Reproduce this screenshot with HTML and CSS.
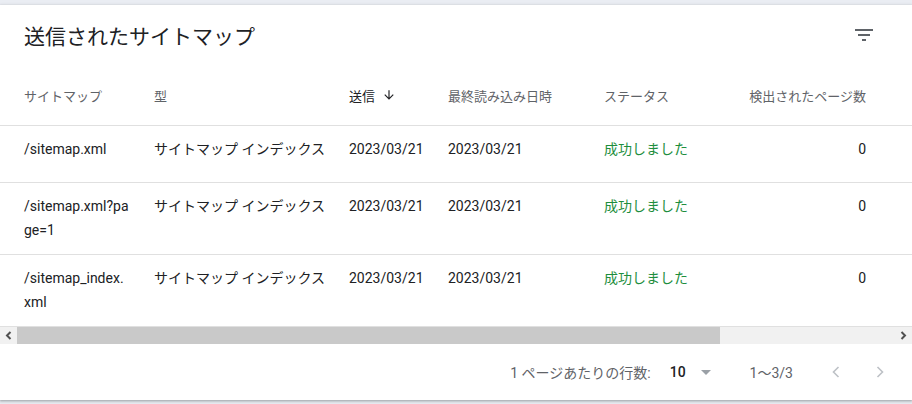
FILE: index.html
```html
<!DOCTYPE html>
<html lang="ja">
<head>
<meta charset="utf-8">
<title>送信されたサイトマップ</title>
<link rel="stylesheet" href="styles.css">
</head>
<body>
<section class="card">
  <header class="card-head">
    <h1 class="title">送信されたサイトマップ</h1>
    <button class="icon-btn" aria-label="フィルタ">
      <svg class="filter-icon" viewBox="0 0 24 24" width="24" height="24"><path d="M10 18h4v-2h-4v2zM3 6v2h18V6H3zm3 7h12v-2H6v2z"/></svg>
    </button>
  </header>
  <div class="scroller">
    <table class="grid">
      <colgroup>
        <col class="c-map"><col class="c-type"><col class="c-sent"><col class="c-read"><col class="c-status"><col class="c-pages"><col class="c-rest">
      </colgroup>
      <thead>
        <tr>
          <th>サイトマップ</th>
          <th>型</th>
          <th class="sorted">送信<svg class="sort-icon" viewBox="0 0 24 24" width="14" height="14"><path d="M20 12l-1.41-1.41L13 16.17V4h-2v12.17l-5.58-5.59L4 12l8 8 8-8z"/></svg></th>
          <th>最終読み込み日時</th>
          <th>ステータス</th>
          <th class="num">検出されたページ数</th>
          <th></th>
        </tr>
      </thead>
      <tbody>
        <tr>
          <td class="path">/sitemap.xml</td>
          <td class="type">サイトマップ インデックス</td>
          <td>2023/03/21</td>
          <td>2023/03/21</td>
          <td class="ok">成功しました</td>
          <td class="num">0</td>
          <td></td>
        </tr>
        <tr>
          <td class="path">/sitemap.xml?page=1</td>
          <td class="type">サイトマップ インデックス</td>
          <td>2023/03/21</td>
          <td>2023/03/21</td>
          <td class="ok">成功しました</td>
          <td class="num">0</td>
          <td></td>
        </tr>
        <tr>
          <td class="path">/sitemap_index.xml</td>
          <td class="type">サイトマップ インデックス</td>
          <td>2023/03/21</td>
          <td>2023/03/21</td>
          <td class="ok">成功しました</td>
          <td class="num">0</td>
          <td></td>
        </tr>
      </tbody>
    </table>
  </div>
  <div class="hscroll" aria-hidden="true">
    <span class="hs-btn"><svg viewBox="0 0 17 17" width="17" height="17"><path d="M10.5 5L7 8.5 10.5 12"/></svg></span>
    <span class="hs-thumb"></span>
    <span class="hs-track"></span>
    <span class="hs-btn"><svg viewBox="0 0 17 17" width="17" height="17"><path d="M6.5 5L10 8.5 6.5 12"/></svg></span>
  </div>
  <footer class="pager">
    <span class="pager-label">1 ページあたりの行数:</span>
    <span class="page-size">10<span class="caret"></span></span>
    <span class="range">1〜3/3</span>
    <button class="nav-btn" aria-label="前のページ"><svg viewBox="0 0 24 24" width="24" height="24"><polyline points="14.5,7 9.5,12 14.5,17"/></svg></button>
    <button class="nav-btn" aria-label="次のページ"><svg viewBox="0 0 24 24" width="24" height="24"><polyline points="9.5,7 14.5,12 9.5,17"/></svg></button>
  </footer>
</section>
</body>
</html>
```
FILE: styles.css
```css
html, body {
  margin: 0;
  padding: 0;
}
body {
  background: #eaedf3;
  height: 404px;
  overflow: hidden;
  padding-top: 5px;
  box-sizing: border-box;
  font-family: Roboto, "Noto Sans CJK JP", sans-serif;
  color: #202124;
}
.card {
  background: #fff;
  height: 395px;
  box-sizing: border-box;
  display: flex;
  flex-direction: column;
  box-shadow: 0 1px 2px 0 rgba(60, 64, 67, 0.3), 0 1px 3px 1px rgba(60, 64, 67, 0.15);
}
.card-head {
  height: 64px;
  flex: none;
  display: flex;
  justify-content: space-between;
  align-items: flex-start;
  padding: 0 24px;
}
.title {
  margin: 18px 0 0;
  font-size: 21px;
  line-height: 28px;
  font-weight: 400;
  color: #202124;
}
.icon-btn {
  margin-top: 6px;
  width: 48px;
  height: 48px;
  border: 0;
  padding: 0;
  background: transparent;
  display: flex;
  align-items: center;
  justify-content: center;
}
.filter-icon {
  fill: #5f6368;
}
.scroller {
  flex: none;
  overflow: hidden;
}
.grid {
  width: 100%;
  table-layout: fixed;
  border-collapse: separate;
  border-spacing: 0;
}
.c-map { width: 130px; }
.c-type { width: 195px; }
.c-sent { width: 99px; }
.c-read { width: 156px; }
.c-status { width: 145px; }
.c-pages { width: 141px; }
.grid th,
.grid td {
  padding: 0 0 0 24px;
  border-bottom: 1px solid #e0e0e0;
  text-align: left;
}
.grid thead tr {
  height: 57px;
}
.grid th {
  font-size: 13px;
  font-weight: 400;
  color: #5f6368;
  vertical-align: middle;
  line-height: 20px;
  white-space: nowrap;
}
.grid th.sorted {
  color: #202124;
}
.sort-icon {
  fill: #202124;
  margin-left: 7px;
  vertical-align: -1px;
}
.grid tbody tr {
  height: 57px;
}
.grid td {
  font-size: 14px;
  line-height: 24px;
  padding-top: 11px;
  padding-bottom: 12px;
  vertical-align: top;
  color: #202124;
}
.grid .num {
  text-align: right;
}
.grid td.path {
  word-break: break-all;
}
.grid td.type {
  white-space: nowrap;
}
.grid td.ok {
  color: #1e8e3e;
}
.hscroll {
  flex: none;
  height: 17px;
  display: flex;
  background: #f1f1f1;
}
.hs-btn {
  width: 17px;
  height: 17px;
  flex: none;
}
.hs-btn path {
  fill: none;
  stroke: #505050;
  stroke-width: 2;
}
.hs-thumb {
  width: 703px;
  flex: none;
  background: #c9c9c9;
}
.hs-track {
  flex: 1;
}
.pager {
  flex: 1;
  display: flex;
  justify-content: flex-end;
  align-items: center;
  padding-right: 12px;
  font-size: 14px;
  color: #5f6368;
}
.pager-label {
  margin-right: 19px;
}
.page-size {
  display: flex;
  align-items: center;
  color: #202124;
  font-weight: 500;
  margin-right: 39px;
}
.caret {
  margin-left: 15px;
  width: 0;
  height: 0;
  border-left: 5px solid transparent;
  border-right: 5px solid transparent;
  border-top: 5px solid #9aa0a6;
}
.range {
  margin-right: 23px;
}
.nav-btn {
  width: 40px;
  height: 40px;
  padding: 0;
  border: 0;
  background: transparent;
  display: flex;
  align-items: center;
  justify-content: center;
}
.nav-btn + .nav-btn {
  margin-left: 4px;
}
.nav-btn svg polyline {
  fill: none;
  stroke: #bdc1c6;
  stroke-width: 1.6;
}
```
